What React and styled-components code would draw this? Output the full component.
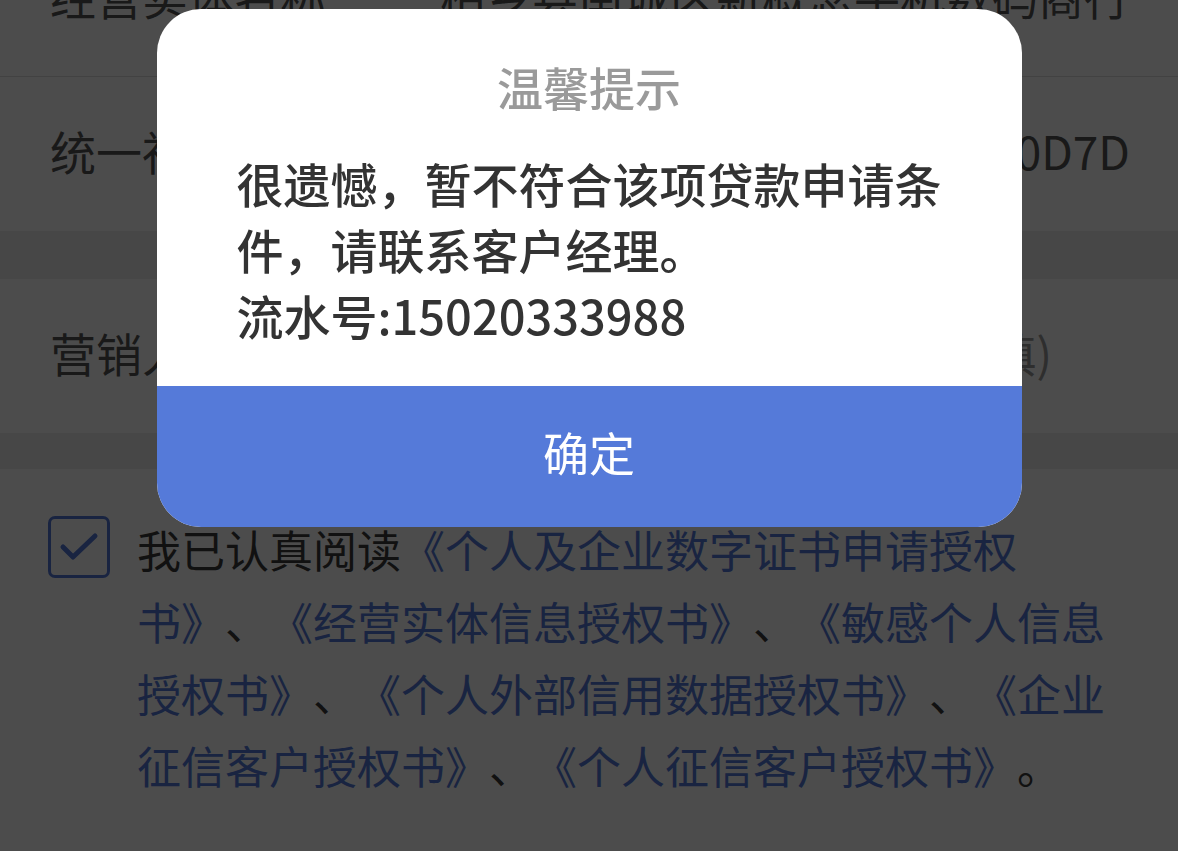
import React from "react";
import styled, { createGlobalStyle } from "styled-components";

const GlobalStyle = createGlobalStyle`
  html, body {
    margin: 0;
    padding: 0;
    background: #ffffff;
    overflow: hidden;
  }
  body {
    font-family: "Noto Sans CJK SC", "Noto Sans", sans-serif;
    text-spacing-trim: space-all;
  }
`;

const Page = styled.div`
  width: 1178px;
  height: 851px;
  overflow: hidden;
  background: #eeeeee;
`;

const Scroller = styled.div`
  margin-top: -77px;
`;

const Group = styled.div`
  background: #ffffff;
  margin-bottom: ${(p) => p.gap || 0}px;
`;

const Row = styled.div`
  height: 154px;
  box-sizing: border-box;
  display: flex;
  align-items: center;
  justify-content: space-between;
  padding: 0 48px 9px 50px;
  font-size: 46px;
  color: #555555;
  border-bottom: ${(p) => (p.last ? "none" : "1px solid #dddddd")};
`;

const Label = styled.span`
  white-space: nowrap;
`;

const Value = styled.span`
  white-space: nowrap;
  color: ${(p) => (p.placeholder ? "#9a9a9a" : "#555555")};
  padding-right: ${(p) => (p.placeholder ? 78 : 0)}px;
`;

const Agreement = styled.div`
  background: #ffffff;
  display: flex;
  align-items: flex-start;
  gap: 27px;
  padding: 47px 40px 60px 48px;
  min-height: 400px;
`;

const CheckBox = styled.div`
  width: 62px;
  height: 62px;
  box-sizing: border-box;
  border: 3px solid #557ad9;
  border-radius: 7px;
  flex-shrink: 0;
  display: flex;
  align-items: center;
  justify-content: center;
`;

const AgreeText = styled.p`
  margin: -3px 0 0 0;
  width: 968px;
  font-size: 44px;
  line-height: 72px;
  color: #3a3a3a;
`;

const Link = styled.span`
  color: #557ad9;
`;

const Overlay = styled.div`
  position: fixed;
  inset: 0;
  background: rgba(0, 0, 0, 0.7);
  display: flex;
  justify-content: center;
  align-items: flex-start;
  padding-top: 9px;
`;

const Dialog = styled.div`
  width: 865px;
  background: #ffffff;
  border-radius: 44px;
  overflow: hidden;
`;

const Title = styled.div`
  text-align: center;
  font-size: 46px;
  line-height: 64px;
  font-weight: 500;
  color: #9a9a9a;
  padding-top: 45px;
`;

const Message = styled.div`
  padding: 32px 80px 0 80px;
  font-size: 47px;
  line-height: 66px;
  font-weight: 500;
  color: #333333;
  height: 268px;
  box-sizing: border-box;
`;

const ConfirmButton = styled.button`
  display: block;
  width: 100%;
  height: 141px;
  border: none;
  background: #557ad9;
  color: #ffffff;
  font-family: inherit;
  font-size: 46px;
  cursor: pointer;
  padding: 0 0 12px 0;
`;

export default function App() {
  return (
    <>
      <GlobalStyle />
      <Page>
        <Scroller>
          <Group gap={48}>
            <Row>
              <Label>经营实体名称：</Label>
              <Value>柏乡县南城区新概念手机数码商行</Value>
            </Row>
            <Row last>
              <Label>统一社会信用代码</Label>
              <Value>92130524MA0E7A0D7D</Value>
            </Row>
          </Group>
          <Group gap={36}>
            <Row last>
              <Label>营销人员工号</Label>
              <Value placeholder>请输入(选填)</Value>
            </Row>
          </Group>
          <Agreement>
            <CheckBox>
              <svg width="40" height="30" viewBox="0 0 40 30" fill="none">
                <path
                  d="M4 15 L14 25 L36 4"
                  stroke="#557ad9"
                  strokeWidth="5"
                  strokeLinecap="round"
                  strokeLinejoin="round"
                />
              </svg>
            </CheckBox>
            <AgreeText>
              我已认真阅读
              <Link>《个人及企业数字证书申请授权<br />书》</Link>、
              <Link>《经营实体信息授权书》</Link>、
              <Link>《敏感个人信息授权书》</Link>、
              <Link>《个人外部信用数据授权书》</Link>、
              <Link>《企业征信客户授权书》</Link>、
              <Link>《个人征信客户授权书》</Link>。
            </AgreeText>
          </Agreement>
        </Scroller>
        <Overlay>
          <Dialog>
            <Title>温馨提示</Title>
            <Message>
              很遗憾，暂不符合该项贷款申请条件，请联系客户经理。
              <br />
              流水号:15020333988
            </Message>
            <ConfirmButton>确定</ConfirmButton>
          </Dialog>
        </Overlay>
      </Page>
    </>
  );
}
